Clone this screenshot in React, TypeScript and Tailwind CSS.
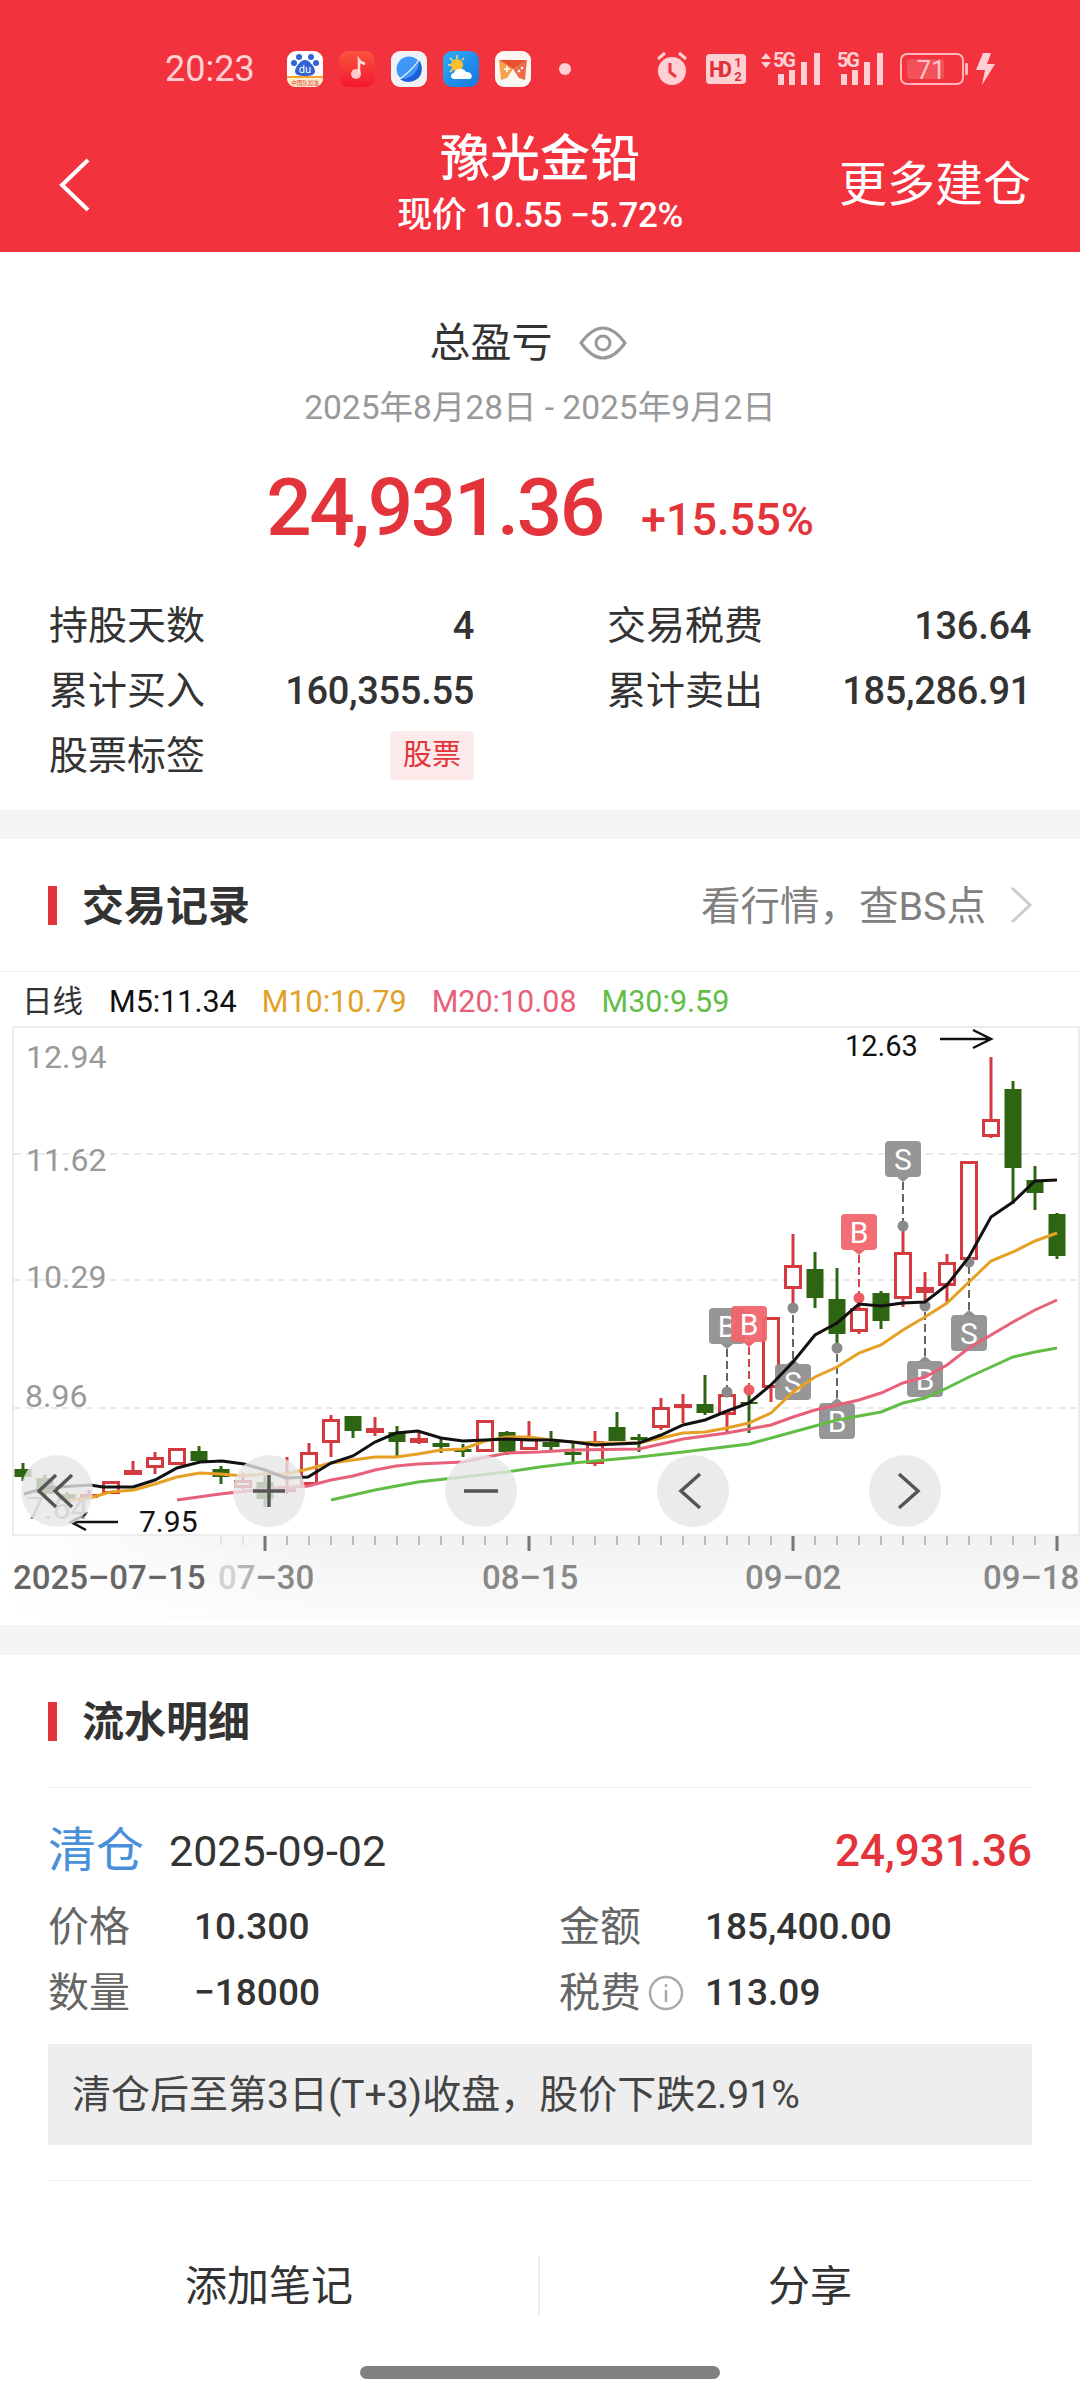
type Candle = [number, number, number, number, number]; // kind(1 up, 0 down), wick top, wick bottom, body top, body bottom

// left to right, one every 22px starting at x=23
const candles: Candle[] = [
  [0, 1463, 1481, 1469, 1477],
  [0, 1475, 1499, 1478, 1494],
  [0, 1492, 1503, 1494, 1500],
  [1, 1490, 1498, 1494, 1498],
  [1, 1481, 1494, 1481, 1494],
  [1, 1461, 1475, 1470, 1475],
  [1, 1452, 1474, 1457, 1468],
  [1, 1448, 1465, 1448, 1465],
  [0, 1446, 1463, 1451, 1461],
  [0, 1466, 1484, 1469, 1477],
  [1, 1473, 1489, 1480, 1488],
  [0, 1476, 1507, 1482, 1499],
  [1, 1457, 1494, 1486, 1492],
  [1, 1443, 1486, 1452, 1485],
  [1, 1415, 1457, 1419, 1443],
  [0, 1416, 1438, 1416, 1431],
  [1, 1417, 1436, 1428, 1433],
  [0, 1426, 1456, 1432, 1442],
  [1, 1432, 1444, 1438, 1443],
  [0, 1438, 1453, 1443, 1447],
  [0, 1444, 1457, 1449, 1452],
  [1, 1420, 1452, 1420, 1452],
  [0, 1431, 1455, 1432, 1452],
  [1, 1421, 1450, 1438, 1450],
  [0, 1431, 1450, 1442, 1447],
  [0, 1442, 1462, 1452, 1455],
  [1, 1431, 1466, 1441, 1464],
  [0, 1412, 1440, 1427, 1441],
  [0, 1434, 1452, 1437, 1440],
  [1, 1398, 1430, 1407, 1428],
  [1, 1394, 1423, 1404, 1406],
  [0, 1375, 1415, 1404, 1413],
  [1, 1393, 1432, 1394, 1415],
  [0, 1392, 1433, 1402, 1404],
  [1, 1317, 1402, 1317, 1388],
  [1, 1234, 1309, 1265, 1289],
  [0, 1252, 1308, 1269, 1298],
  [0, 1268, 1347, 1299, 1334],
  [1, 1297, 1334, 1308, 1332],
  [0, 1291, 1329, 1293, 1321],
  [1, 1227, 1307, 1252, 1299],
  [1, 1272, 1303, 1287, 1293],
  [1, 1254, 1303, 1262, 1286],
  [1, 1161, 1260, 1161, 1260],
  [1, 1057, 1138, 1119, 1137],
  [0, 1081, 1204, 1089, 1168],
  [0, 1166, 1210, 1180, 1193],
  [0, 1213, 1259, 1214, 1256],
];

const ma5 = "24,1494 45,1488 90,1485 103,1487 133,1487 155,1480 177,1468 200,1462 222,1461 244,1464 265,1470 286,1478 308,1477 331,1463 353,1456 375,1442 396,1433 418,1431 441,1438 463,1441 485,1440 507,1439 529,1440 551,1440 573,1442 595,1445 617,1444 639,1443 661,1435 683,1425 705,1420 727,1411 749,1403 771,1385 793,1362 815,1335 837,1323 859,1304 881,1306 903,1303 925,1302 947,1285 969,1257 991,1217 1013,1202 1035,1181 1057,1180";
const ma10 = "65,1501 90,1498 110,1492 134,1490 155,1484 177,1477 200,1473 220,1474 244,1476 265,1474 286,1474 308,1469 331,1463 353,1460 375,1457 396,1457 418,1454 441,1450 463,1449 485,1441 507,1437 529,1437 551,1440 573,1442 595,1443 617,1443 639,1443 661,1438 683,1433 705,1432 727,1428 749,1423 771,1413 793,1392 815,1377 837,1367 859,1353 881,1345 903,1330 925,1317 947,1303 969,1282 991,1261 1013,1252 1035,1241 1057,1233";
const ma20 = "177,1500 220,1494 265,1489 308,1486 331,1480 353,1476 375,1470 396,1466 418,1464 463,1462 507,1453 539,1452 573,1450 639,1449 661,1444 683,1439 727,1433 749,1429 771,1425 793,1417 815,1410 837,1405 859,1400 881,1393 903,1383 925,1377 947,1365 969,1348 991,1335 1013,1322 1035,1310 1057,1300";
const ma30 = "331,1500 375,1490 418,1482 463,1477 507,1472 540,1467 573,1463 639,1457 683,1452 749,1444 771,1438 793,1432 815,1426 837,1420 881,1412 903,1403 925,1398 947,1388 969,1377 991,1367 1013,1357 1035,1352 1057,1348";

type Mark = { x: number; label: string; red?: boolean; up?: boolean; top: number; dot: number };

// up = badge sits above the dot, pointer facing down
const marks: Mark[] = [
  { x: 727, label: "B", up: true, top: 1308, dot: 1392 },
  { x: 749, label: "B", up: true, red: true, top: 1306, dot: 1390 },
  { x: 859, label: "B", up: true, red: true, top: 1214, dot: 1298 },
  { x: 903, label: "S", up: true, top: 1141, dot: 1226 },
  { x: 793, label: "S", top: 1364, dot: 1308 },
  { x: 837, label: "B", top: 1403, dot: 1348 },
  { x: 925, label: "B", top: 1361, dot: 1306 },
  { x: 969, label: "S", top: 1315, dot: 1262 },
];

const smallTicks = Array.from({ length: 38 }, (_, i) => 221 + i * 22);

function MarkBadge({ m }: { m: Mark }) {
  const fill = m.red ? "#f0666b" : "#8f8f8f";
  const bottom = m.top + 36;
  const lineFrom = m.up ? bottom + 5 : m.top - 5;
  return (
    <g>
      <line x1={m.x} x2={m.x} y1={lineFrom} y2={m.dot} stroke={m.red ? "#d4444c" : "#666"} strokeWidth="2" strokeDasharray="8 4" />
      <circle cx={m.x} cy={m.dot} r="5.5" fill={m.red ? "#ee5c62" : "#8a8a8a"} />
      <rect x={m.x - 18} y={m.top} width="36" height="36" rx="4" fill={fill} fillOpacity="0.94" />
      {m.up ? (
        <path d={`M${m.x - 6} ${bottom}L${m.x} ${bottom + 5}L${m.x + 6} ${bottom}Z`} fill={fill} />
      ) : (
        <path d={`M${m.x - 6} ${m.top}L${m.x} ${m.top - 5}L${m.x + 6} ${m.top}Z`} fill={fill} />
      )}
      <text x={m.x} y={m.top + 29} textAnchor="middle" fontSize="30" fill="#fff">{m.label}</text>
    </g>
  );
}

function KChart() {
  return (
    <svg className="block" width="1080" height="594" viewBox="0 1026 1080 594">
      <defs>
        <linearGradient id="axisBg" x1="0" y1="0" x2="0" y2="1">
          <stop offset="0" stopColor="#f1f1f1" />
          <stop offset="1" stopColor="#fcfcfc" />
        </linearGradient>
        <linearGradient id="axisFade" x1="0" y1="0" x2="1" y2="0">
          <stop offset="0" stopColor="#fff" />
          <stop offset="1" stopColor="#fff" stopOpacity="0" />
        </linearGradient>
      </defs>
      <rect x="0" y="1535" width="1080" height="85" fill="url(#axisBg)" />
      <rect x="0" y="1535" width="340" height="85" fill="url(#axisFade)" />
      <rect x="13" y="1027" width="1066" height="508" fill="#fff" stroke="#ececec" strokeWidth="2" />
      {[1154, 1280, 1408].map((y) => (
        <line key={y} x1="14" x2="1078" y1={y} y2={y} stroke="#e2e2e2" strokeWidth="1.5" strokeDasharray="7 5" />
      ))}
      <g fontSize="32" fill="#999">
        <text x="26" y="1068">12.94</text>
        <text x="26" y="1171">11.62</text>
        <text x="26" y="1288">10.29</text>
        <text x="25" y="1407">8.96</text>
        <text x="26" y="1519">7.64</text>
      </g>
      {candles.map((c, i) => {
        const x = 23 + i * 22;
        const color = c[0] ? "#d33a40" : "#2e6512";
        return (
          <g key={i}>
            <line x1={x} x2={x} y1={c[1]} y2={c[2]} stroke={color} strokeWidth="3" />
            {c[0] ? (
              <rect x={x - 7.5} y={c[3] + 1.5} width="15" height={Math.max(c[4] - c[3] - 3, 1)} fill="#fff" stroke={color} strokeWidth="3" />
            ) : (
              <rect x={x - 8.5} y={c[3]} width="17" height={c[4] - c[3]} fill={color} />
            )}
          </g>
        );
      })}
      {marks.map((m) => (
        <MarkBadge key={`${m.x}-${m.top}`} m={m} />
      ))}
      <polyline points={ma30} fill="none" stroke="#62bd47" strokeWidth="3" />
      <polyline points={ma20} fill="none" stroke="#e8607a" strokeWidth="3" />
      <polyline points={ma10} fill="none" stroke="#e6a024" strokeWidth="3" />
      <polyline points={ma5} fill="none" stroke="#111" strokeWidth="3" />

      <text x="845" y="1056" fontSize="29" fill="#111">12.63</text>
      <path d="M940 1039H991M973 1030L991 1039L973 1048" fill="none" stroke="#111" strokeWidth="2.5" />
      <text x="139" y="1532" fontSize="30" fill="#111">7.95</text>
      <path d="M118 1522H71M86 1514L71 1522L86 1530" fill="none" stroke="#111" strokeWidth="2.5" />

      {smallTicks.map((x) => (
        <line key={x} x1={x} x2={x} y1="1536" y2="1545" stroke={x < 260 ? "#ddd" : "#aaa"} strokeWidth="1.5" />
      ))}
      {[265, 529, 793, 1057].map((x) => (
        <line key={x} x1={x} x2={x} y1="1536" y2="1551" stroke="#777" strokeWidth="3" />
      ))}
      <g fontSize="33" fontWeight="500" fill="#888">
        <text x="13" y="1589" fill="#666">2025–07–15</text>
        <text x="218" y="1589"><tspan fill="#d2d2d2">0</tspan><tspan fill="#b5b5b5">7</tspan>–30</text>
        <text x="482" y="1589">08–15</text>
        <text x="745" y="1589">09–02</text>
        <text x="983" y="1589">09–18</text>
      </g>
    </svg>
  );
}

function ChartButton({ d }: { d: string }) {
  return (
    <div className="w-[72px] h-[72px] rounded-full bg-[#e6e6e6]/80 flex items-center justify-center">
      <svg width="40" height="40" viewBox="0 0 40 40">
        <path d={d} fill="none" stroke="#555" strokeWidth="3.5" />
      </svg>
    </div>
  );
}

function AppTile({ children }: { children: React.ReactNode }) {
  return (
    <svg width="36" height="36" viewBox="0 0 36 36" className="shrink-0">
      {children}
    </svg>
  );
}

function StatusIcons() {
  return (
    <div className="flex items-center h-[36px] mt-[51px] pl-[165px]">
      <span className="w-[92px] text-[36px] leading-[36px] text-[#ffd0d3]">20:23</span>
      <div className="flex gap-[16px] ml-[30px]">
        <AppTile>
          <rect width="36" height="36" rx="9" fill="#fff" />
          <path d="M0 26H36V27C36 32 32 36 27 36H9C4 36 0 32 0 27Z" fill="#fdeccd" />
          <rect y="25" width="36" height="2" fill="#f7a531" />
          <circle cx="12" cy="6" r="3" fill="#2f63d6" />
          <circle cx="24" cy="6" r="3" fill="#2f63d6" />
          <circle cx="7" cy="12" r="3" fill="#2f63d6" />
          <circle cx="29" cy="12" r="3" fill="#2f63d6" />
          <path d="M18 9C13 9 8 17 8 20C8 24 12 25 18 25C24 25 28 24 28 20C28 17 23 9 18 9Z" fill="#2f63d6" />
          <text x="18" y="22" textAnchor="middle" fontSize="11" fill="#fff">du</text>
          <text x="18" y="34" textAnchor="middle" fontSize="5.5" fill="#e2412d">中国队加油</text>
        </AppTile>
        <AppTile>
          <defs>
            <linearGradient id="musicBg" x1="0" y1="0" x2="0" y2="1">
              <stop offset="0" stopColor="#f9553f" />
              <stop offset="1" stopColor="#f5172e" />
            </linearGradient>
          </defs>
          <rect width="36" height="36" rx="9" fill="url(#musicBg)" />
          <circle cx="17" cy="23" r="5" fill="#ffc6cc" />
          <path d="M20 23V9C20 9 22 12 26 13" fill="none" stroke="#ffd9dc" strokeWidth="2.6" />
        </AppTile>
        <AppTile>
          <rect width="36" height="36" rx="9" fill="#f1f2f5" />
          <circle cx="18" cy="18" r="12.5" fill="#3f97f7" />
          <path d="M28 9C29 20 20 29 9 28C15 33 25 31 29 25C32 20 31 13 28 9Z" fill="#1d5fd6" />
          <path d="M6 29C12 27 24 16 30 6" fill="none" stroke="#f1f2f5" strokeWidth="1.2" />
        </AppTile>
        <AppTile>
          <defs>
            <linearGradient id="weatherBg" x1="0" y1="0" x2="1" y2="1">
              <stop offset="0" stopColor="#2eaaf8" />
              <stop offset="1" stopColor="#1578dc" />
            </linearGradient>
          </defs>
          <rect width="36" height="36" rx="9" fill="url(#weatherBg)" />
          <path d="M14 4V8M5 14H9M7 7L10 10M21 7L19 9M7 21L10 18" stroke="#f7e27c" strokeWidth="1.4" />
          <circle cx="14" cy="14" r="6" fill="#fbbf2c" />
          <path d="M11 28C7 28 7 22 11 22C12 17 21 16 23 21C29 20 31 28 26 28Z" fill="#fff" />
        </AppTile>
        <AppTile>
          <rect width="36" height="36" rx="9" fill="#fbf6f2" />
          <path d="M4 9L18 18L12 27L6 29Z" fill="#f6a24c" />
          <path d="M32 9L18 18L24 27L30 29Z" fill="#ee6c4a" />
          <path d="M4 9H32L18 18Z" fill="#e8512f" />
          <path d="M9 18H15M12 15V21" stroke="#fff" strokeWidth="1.6" />
          <circle cx="24" cy="20" r="1.3" fill="#fff" />
          <circle cx="27" cy="17" r="1.3" fill="#fff" />
        </AppTile>
      </div>
      <span className="w-[12px] h-[12px] rounded-full bg-[#ffd0d3] ml-[28px]" />
      <svg width="34" height="36" viewBox="0 0 34 36" className="ml-[84px]">
        <path d="M3 8L10 2M31 8L24 2" stroke="#ffd0d3" strokeWidth="3" />
        <circle cx="17" cy="20" r="14" fill="#ffd0d3" />
        <path d="M15 12V21L21 26" fill="none" stroke="#f2323d" strokeWidth="3" />
      </svg>
      <svg width="40" height="30" viewBox="0 0 40 30" className="ml-[17px]">
        <rect width="40" height="30" rx="4" fill="#ffd0d3" />
        <text x="3" y="23" fontSize="22" fontWeight="700" fill="#e0323c" textLength="23">HD</text>
        <text x="32" y="13" textAnchor="middle" fontSize="13" fontWeight="700" fill="#e0323c">1</text>
        <text x="32" y="27" textAnchor="middle" fontSize="13" fontWeight="700" fill="#e0323c">2</text>
      </svg>
      <svg width="60" height="32" viewBox="0 0 60 32" className="ml-[15px] overflow-visible">
        <path d="M0 6L5 0L10 6ZM0 9H10L5 15Z" fill="#ffd0d3" />
        <text x="12" y="14" fontSize="20" fontWeight="700" fill="#ffd0d3" textLength="23">5G</text>
        <rect x="17" y="21" width="6" height="11" fill="#ffd0d3" />
        <rect x="28" y="17" width="6" height="15" fill="#ffd0d3" />
        <rect x="40" y="9" width="6" height="23" fill="#ffd0d3" />
        <rect x="53" y="0" width="6" height="32" fill="#ffd0d3" />
      </svg>
      <svg width="47" height="32" viewBox="0 0 47 32" className="ml-[16px] overflow-visible">
        <text x="0" y="14" fontSize="20" fontWeight="700" fill="#ffd0d3" textLength="23">5G</text>
        <rect x="4" y="21" width="6" height="11" fill="#ffd0d3" />
        <rect x="15" y="17" width="6" height="15" fill="#ffd0d3" />
        <rect x="27" y="9" width="6" height="23" fill="#ffd0d3" />
        <rect x="40" y="0" width="6" height="32" fill="#ffd0d3" />
      </svg>
      <svg width="68" height="32" viewBox="0 0 68 32" className="ml-[16px]">
        <rect x="1" y="1" width="62" height="30" rx="6" fill="none" stroke="#ffb5ba" strokeWidth="2" />
        <rect x="7" y="6" width="37" height="20" rx="3" fill="#ffffff" fillOpacity="0.15" />
        <rect x="65" y="10" width="3" height="12" rx="1" fill="#ffb5ba" />
        <text x="31" y="26" textAnchor="middle" fontSize="26" fill="#ffc4c8">71</text>
      </svg>
      <svg width="20" height="32" viewBox="0 0 20 32" className="ml-[7px]">
        <path d="M8 0H16L12 11H20L7 32L10 17H1Z" fill="#ffd0d3" />
      </svg>
    </div>
  );
}

function SectionTitle({ title }: { title: string }) {
  return (
    <div className="flex items-center">
      <span className="w-[9px] h-[39px] bg-[#e2343a]" />
      <span className="ml-[25px] pt-[4px] text-[42px] leading-[50px] font-bold text-[#333]">{title}</span>
    </div>
  );
}

function StatRow({ label, value }: { label: string; value: string }) {
  return (
    <div className="flex items-center justify-between h-[65px]">
      <span className="text-[39px] leading-[50px] text-[#333]">{label}</span>
      <span className="text-[38px] leading-[50px] font-medium tracking-[-0.3px] text-[#333]">{value}</span>
    </div>
  );
}

function Detail({ label, value, info }: { label: string; value: string; info?: boolean }) {
  return (
    <div className="flex items-center h-[66px]">
      <div className="w-[146px] flex items-center">
        <span className="text-[41px] leading-[50px] text-[#666]">{label}</span>
        {info && (
          <svg width="36" height="36" viewBox="0 0 36 36" className="ml-[7px]">
            <circle cx="18" cy="18" r="16" fill="none" stroke="#aaa" strokeWidth="2.5" />
            <path d="M18 15V27M18 9V12" stroke="#aaa" strokeWidth="2.5" />
          </svg>
        )}
      </div>
      <span className="text-[37px] leading-[50px] font-medium text-[#333]">{value}</span>
    </div>
  );
}

export default function App() {
  return (
    <div className="w-[1080px] h-[2400px] overflow-hidden bg-white flex flex-col font-[Roboto,'Noto_Sans_CJK_SC',sans-serif]">
      <header className="h-[252px] shrink-0 bg-[#f2323d] text-white">
        <StatusIcons />
        <div className="grid grid-cols-[1fr_auto_1fr] h-[94px] mt-[46px]">
          <div className="self-center pl-[59px]">
            <svg width="32" height="54" viewBox="0 0 32 54" className="block">
              <path d="M29 2L3 27L29 52" fill="none" stroke="#fff" strokeWidth="4" />
            </svg>
          </div>
          <div className="flex flex-col items-center">
            <div className="pt-[1px] text-[50px] leading-[50px] font-medium">豫光金铅</div>
            <div className="text-[35px] leading-[40px] mt-[12px] font-medium tracking-[-0.4px] whitespace-nowrap">现价 10.55 −5.72%</div>
          </div>
          <div className="self-center text-right pr-[49px] text-[48px] leading-[56px]">更多建仓</div>
        </div>
      </header>

      <section className="h-[558px] shrink-0 flex flex-col">
        <div className="flex items-center justify-center h-[50px] mt-[66px] pr-[24px]">
          <span className="text-[41px] leading-[50px] text-[#333]">总盈亏</span>
          <svg width="48" height="34" viewBox="0 0 48 34" className="ml-[26px]">
            <path d="M2 17C10 6 18 2 24 2C30 2 38 6 46 17C38 28 30 32 24 32C18 32 10 28 2 17Z" fill="none" stroke="#999" strokeWidth="3" />
            <circle cx="24" cy="17" r="7" fill="none" stroke="#999" strokeWidth="3" />
          </svg>
        </div>
        <div className="text-center text-[33.5px] leading-[40px] mt-[20px] text-[#999]">2025年8月28日 - 2025年9月2日</div>
        <div className="flex items-baseline justify-center mt-[35px] gap-[38px] text-[#e2343a] font-medium">
          <span className="text-[80px] leading-[90px] tracking-[-2.4px]">24,931.36</span>
          <span className="text-[45px] leading-[50px]">+15.55%</span>
        </div>
        <div className="grid grid-cols-[425px_424px] gap-x-[133px] px-[49px] mt-[40px]">
          <StatRow label="持股天数" value="4" />
          <StatRow label="交易税费" value="136.64" />
          <StatRow label="累计买入" value="160,355.55" />
          <StatRow label="累计卖出" value="185,286.91" />
          <div className="flex items-center justify-between h-[65px]">
            <span className="text-[39px] leading-[50px] text-[#333]">股票标签</span>
            <span className="w-[84px] h-[49px] flex items-center justify-center rounded-t-[6px] bg-[#fdeaea] text-[29px] text-[#e2343a]">股票</span>
          </div>
        </div>
      </section>

      <div className="h-[29px] shrink-0 bg-[#f4f4f4]" />

      <div className="h-[133px] shrink-0 px-[48px] flex items-center justify-between border-b border-[#eee]">
        <SectionTitle title="交易记录" />
        <div className="flex items-center">
          <span className="pt-[3px] text-[39.5px] leading-[50px] text-[#808080]">看行情，查BS点</span>
          <svg width="22" height="38" viewBox="0 0 22 38" className="ml-[24px]">
            <path d="M2 2L20 19L2 36" fill="none" stroke="#ccc" strokeWidth="3" />
          </svg>
        </div>
      </div>

      <div className="h-[54px] shrink-0 pt-[6px] pl-[22px] flex items-center text-[30.5px] leading-[40px] whitespace-nowrap">
        <span className="text-[#333]">日线</span>
        <span className="ml-[26px] text-[#111]">M5:11.34</span>
        <span className="ml-[25px] text-[#e2a027]">M10:10.79</span>
        <span className="ml-[25px] text-[#e8607a]">M20:10.08</span>
        <span className="ml-[25px] text-[#62bd47]">M30:9.59</span>
      </div>

      <div className="relative h-[594px] shrink-0">
        <KChart />
        <div className="absolute left-[21px] top-[429px] flex gap-[140px]">
          <ChartButton d="M19 4L2 20L19 36M35 4L18 20L35 36" />
          <ChartButton d="M4 20H36M20 4V36" />
          <ChartButton d="M3 20H37" />
          <ChartButton d="M27 3L8 20L27 37" />
          <ChartButton d="M14 3L33 20L14 37" />
        </div>
      </div>

      <div className="h-[5px] shrink-0" />
      <div className="h-[30px] shrink-0 bg-[#f4f4f4]" />

      <div className="px-[48px] flex flex-col">
        <div className="h-[133px] flex items-center border-b border-[#eee]">
          <SectionTitle title="流水明细" />
        </div>
        <div className="flex items-center justify-between h-[60px] mt-[33px]">
          <div className="flex items-center">
            <span className="text-[48px] leading-[60px] text-[#4a90d9]">清仓</span>
            <span className="ml-[25px] text-[43px] leading-[50px] text-[#333]">2025-09-02</span>
          </div>
          <span className="text-[44px] leading-[50px] font-medium text-[#e2343a]">24,931.36</span>
        </div>
        <div className="grid grid-cols-[511px_1fr] mt-[13px]">
          <Detail label="价格" value="10.300" />
          <Detail label="金额" value="185,400.00" />
          <Detail label="数量" value="−18000" />
          <Detail label="税费" value="113.09" info />
        </div>
        <div className="h-[101px] mt-[18px] bg-[#eee] pl-[24px] flex items-center text-[39px] leading-[50px] text-[#444] whitespace-nowrap">
          清仓后至第3日(T+3)收盘，股价下跌2.91%
        </div>
        <div className="h-px mt-[35px] bg-[#eee]" />
      </div>

      <div className="grid grid-cols-2 h-[60px] mt-[75px] text-[42px] leading-[50px] text-[#333]">
        <div className="flex items-center justify-center pt-[2px] border-r-2 border-[#eee]">添加笔记</div>
        <div className="flex items-center justify-center pt-[2px]">分享</div>
      </div>

      <div className="w-[360px] h-[13px] mt-[50px] self-center rounded-full bg-[#808080]" />
    </div>
  );
}
